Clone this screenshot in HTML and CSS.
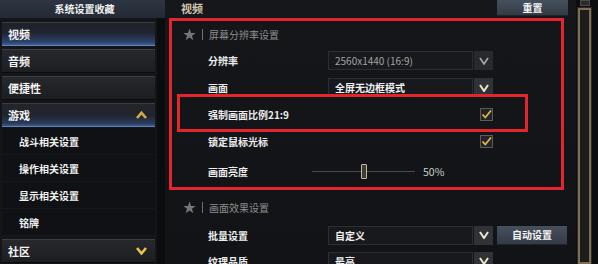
FILE: index.html
```html
<!DOCTYPE html>
<html lang="zh">
<head>
<meta charset="utf-8">
<title>系统设置</title>
<link rel="stylesheet" href="styles.css">
</head>
<body>
<div class="app">
  <aside class="sidebar">
    <div class="side-head">系统设置收藏</div>
    <div class="nav">
      <div class="nav-item active">视频</div>
      <div class="nav-item">音频</div>
      <div class="nav-item">便捷性</div>
      <div class="nav-item open">游戏
        <svg class="chev" width="11" height="8" viewBox="0 0 11 8"><path d="M1 7 L5.5 1.8 L10 7" fill="none" stroke="#d9a746" stroke-width="2.6" stroke-linejoin="miter"/></svg>
      </div>
      <div class="sub-list">
        <div class="sub">战斗相关设置</div>
        <div class="sub">操作相关设置</div>
        <div class="sub">显示相关设置</div>
        <div class="sub">铭牌</div>
      </div>
      <div class="nav-item">社区
        <svg class="chev" width="11" height="8" viewBox="0 0 11 8"><path d="M1 1 L5.5 6.5 L10 1" fill="none" stroke="#e8c24c" stroke-width="2.6" stroke-linejoin="miter"/></svg>
      </div>
    </div>
  </aside>

  <main class="main">
    <header class="main-head">
      <span class="tab">视频</span>
      <button class="btn reset">重置</button>
    </header>
    <div class="panel">
      <section class="group marked">
        <div class="group-title">
          <svg class="star" width="13" height="13" viewBox="0 0 13 13"><polygon points="6.5,0.5 8.03,4.9 12.68,4.99 8.97,7.8 10.32,12.26 6.5,9.6 2.68,12.26 4.03,7.8 0.32,4.99 4.97,4.9" fill="#767676"/></svg>
          <span class="sep"></span>
          <span>屏幕分辨率设置</span>
        </div>
        <div class="row">
          <span class="label">分辨率</span>
          <div class="select dim">
            <span class="val">2560x1440 (16:9)</span>
            <span class="arr"><svg width="10" height="8" viewBox="0 0 10 8"><path d="M1 1 L5 7 L9 1" fill="none" stroke="#a9a9a9" stroke-width="1.6"/></svg></span>
          </div>
        </div>
        <div class="row">
          <span class="label">画面</span>
          <div class="select">
            <span class="val">全屏无边框模式</span>
            <span class="arr"><svg width="10" height="8" viewBox="0 0 10 8"><path d="M1 1 L5 7 L9 1" fill="none" stroke="#ece4cc" stroke-width="2"/></svg></span>
          </div>
        </div>
        <div class="row">
          <span class="label">强制画面比例21:9</span>
          <div class="ctrl-end">
            <span class="check"><svg width="11" height="11" viewBox="0 0 11 11"><path d="M1.5 5.5 L4.3 8.5 L10 1.5" fill="none" stroke="#e8b64a" stroke-width="1.8"/></svg></span>
          </div>
        </div>
        <div class="row">
          <span class="label">锁定鼠标光标</span>
          <div class="ctrl-end">
            <span class="check"><svg width="11" height="11" viewBox="0 0 11 11"><path d="M1.5 5.5 L4.3 8.5 L10 1.5" fill="none" stroke="#e8b64a" stroke-width="1.8"/></svg></span>
          </div>
        </div>
        <div class="row slider-row">
          <span class="label">画面亮度</span>
          <div class="track"><span class="thumb"></span></div>
          <span class="pct">50%</span>
        </div>
        <div class="mark"></div>
      </section>

      <section class="group plain">
        <div class="group-title">
          <svg class="star" width="13" height="13" viewBox="0 0 13 13"><polygon points="6.5,0.5 8.03,4.9 12.68,4.99 8.97,7.8 10.32,12.26 6.5,9.6 2.68,12.26 4.03,7.8 0.32,4.99 4.97,4.9" fill="#767676"/></svg>
          <span class="sep"></span>
          <span>画面效果设置</span>
        </div>
        <div class="row">
          <span class="label">批量设置</span>
          <div class="select">
            <span class="val">自定义</span>
            <span class="arr"><svg width="10" height="8" viewBox="0 0 10 8"><path d="M1 1 L5 7 L9 1" fill="none" stroke="#ece4cc" stroke-width="2"/></svg></span>
          </div>
          <button class="btn auto">自动设置</button>
        </div>
        <div class="row">
          <span class="label">纹理品质</span>
          <div class="select">
            <span class="val">最高</span>
            <span class="arr"><svg width="10" height="8" viewBox="0 0 10 8"><path d="M1 1 L5 7 L9 1" fill="none" stroke="#ece4cc" stroke-width="2"/></svg></span>
          </div>
        </div>
      </section>
    </div>
  </main>

  <div class="scrollbar">
    <div class="sb-up"></div>
    <div class="sb-track"></div>
  </div>
</div>
</body>
</html>
```

FILE: styles.css
```css
* { box-sizing: border-box; margin: 0; padding: 0; }
html, body { width: 598px; height: 264px; overflow: hidden; background: #0d0f12; }
body {
  font-family: "Noto Sans CJK SC", "Noto Sans", sans-serif;
  font-size: 10px;
  color: #e8e8e8;
}
.app { display: flex; height: 264px; }

/* sidebar */
.sidebar {
  width: 165px; flex: none;
  background: linear-gradient(90deg, #131519 0 157px, #0b0c0e 157px);
  display: flex; flex-direction: column;
}
.side-head {
  height: 18px; line-height: 18px;
  text-align: center; padding-left: 4px;
  font-weight: 700; font-size: 10px; color: #f2f2f2;
  background: linear-gradient(#2d3542, #232a35);
}
.nav { width: 153px; margin: 4px 0 0 2px; display: flex; flex-direction: column; }
.nav-item {
  height: 24px; margin-bottom: 3px;
  display: flex; align-items: center; justify-content: space-between;
  padding: 0 8px 0 6px;
  font-size: 11px; font-weight: 700; color: #f4f4f4;
  background: linear-gradient(#26282c, #1c1e22);
  border-top: 1px solid #3a3d42;
  border-bottom: 1px solid #0a0b0d;
}
.nav-item.active {
  background: linear-gradient(#1f2227 0%, #1f2430 45%, #2c4168 85%, #3b5e94 100%);
  border-bottom: 1px solid #6586ba;
}
.nav-item.open {
  margin-bottom: 1px;
  background: linear-gradient(#23252a 0%, #20242d 50%, #2a3b5c 88%, #3a5a8c 100%);
  border-bottom: 1px solid #5f80b3;
}
.chev { display: block; }
.sub-list { display: flex; flex-direction: column; margin-bottom: 3px; background: #0f1114; }
.sub {
  height: 27px; line-height: 27px;
  padding-left: 17px;
  font-weight: 700; font-size: 10px; color: #f0f0f0;
  border-bottom: 1px solid #16181b;
}

/* main */
.main { width: 411px; flex: none; display: flex; flex-direction: column; }
.main-head {
  height: 18px; display: flex; align-items: flex-start;
  background: #15171b;
}
.tab {
  padding-left: 16px; line-height: 16px;
  font-size: 11px; font-weight: 700; color: #cfc6ad;
}
.btn {
  font-family: inherit; font-weight: 700; color: #f4f4f4; font-size: 10px;
  border: none; cursor: pointer;
  background: linear-gradient(#46505d, #343b46);
  border-bottom: 1px solid #1f242b;
}
.reset { margin-left: auto; margin-right: 8px; width: 71px; height: 16px; }

.panel {
  flex: 1; padding: 2px 0 0 4px;
  background: linear-gradient(#141619, #111316);
}
.group { width: 395px; position: relative; }
.group.marked { border: 3px solid #e4252b; height: 172px; }
.group.plain { border: 3px solid transparent; border-top: 0; }

.group-title {
  height: 26px; display: flex; align-items: center;
  padding-left: 11px; color: #8e8e8e; font-size: 10px;
}
.plain .group-title { height: 32px; padding-top: 2px; }
.star { display: block; flex: none; }
.sep { width: 1px; height: 11px; background: #6f6f6f; margin: 0 6px; }

.row {
  display: grid; grid-template-columns: 120px 165px auto;
  align-items: center; height: 27px; padding-left: 36px;
}
.plain .row { height: 26px; }
.label { font-size: 10px; font-weight: 700; color: #ececec; white-space: nowrap; }

.select { display: flex; height: 19px; gap: 1px; }
.select .val {
  flex: 1; background: #17191c; border: 1px solid #2b2e33;
  padding-left: 6px; line-height: 17px;
  font-weight: 700; color: #f0f0f0; font-size: 10px;
}
.select.dim .val { font-weight: 400; color: #a4a4a4; }
.select .arr {
  width: 19px; flex: none; background: #2f3237;
  display: flex; align-items: center; justify-content: center;
}
.select.dim .arr { background: #26292d; }

.ctrl-end { display: flex; justify-content: flex-end; }
.check {
  width: 13px; height: 13px; border: 1px solid #5b5b5b; background: #222428;
  display: flex; align-items: center; justify-content: center;
}

.slider-row { grid-template-columns: 104px 103px auto; height: 32px; }
.track {
  height: 15px; display: flex; align-items: center; justify-content: center;
  background: linear-gradient(#4b4b4b, #4b4b4b) center / 100% 1px no-repeat;
}
.thumb {
  width: 6px; height: 15px; border: 1px solid #c9b98c; border-radius: 1px;
  background: #3c3c3c;
}
.pct { margin-left: 8px; font-size: 10.5px; color: #cfcfcf; }

.auto { margin-left: 4px; width: 70px; height: 19px; }

.mark {
  position: absolute; left: 5px; top: 73px;
  width: 351px; height: 38px;
  border: 3px solid #e4252b;
}

/* scrollbar */
.scrollbar { flex: 1; display: flex; flex-direction: column; padding-left: 2px; background: #0c0d0f; }
.sb-up {
  width: 10px; height: 6px; margin-left: 2px;
  border: 1px solid #4a4a4a; background: #2a2a2a;
}
.sb-track {
  width: 13px; flex: 1; margin-top: 2px;
  border: 2px solid #7e6f51; background: #1c1c1c;
  box-shadow: 0 0 0 1px #2a2a2a;
}
```
